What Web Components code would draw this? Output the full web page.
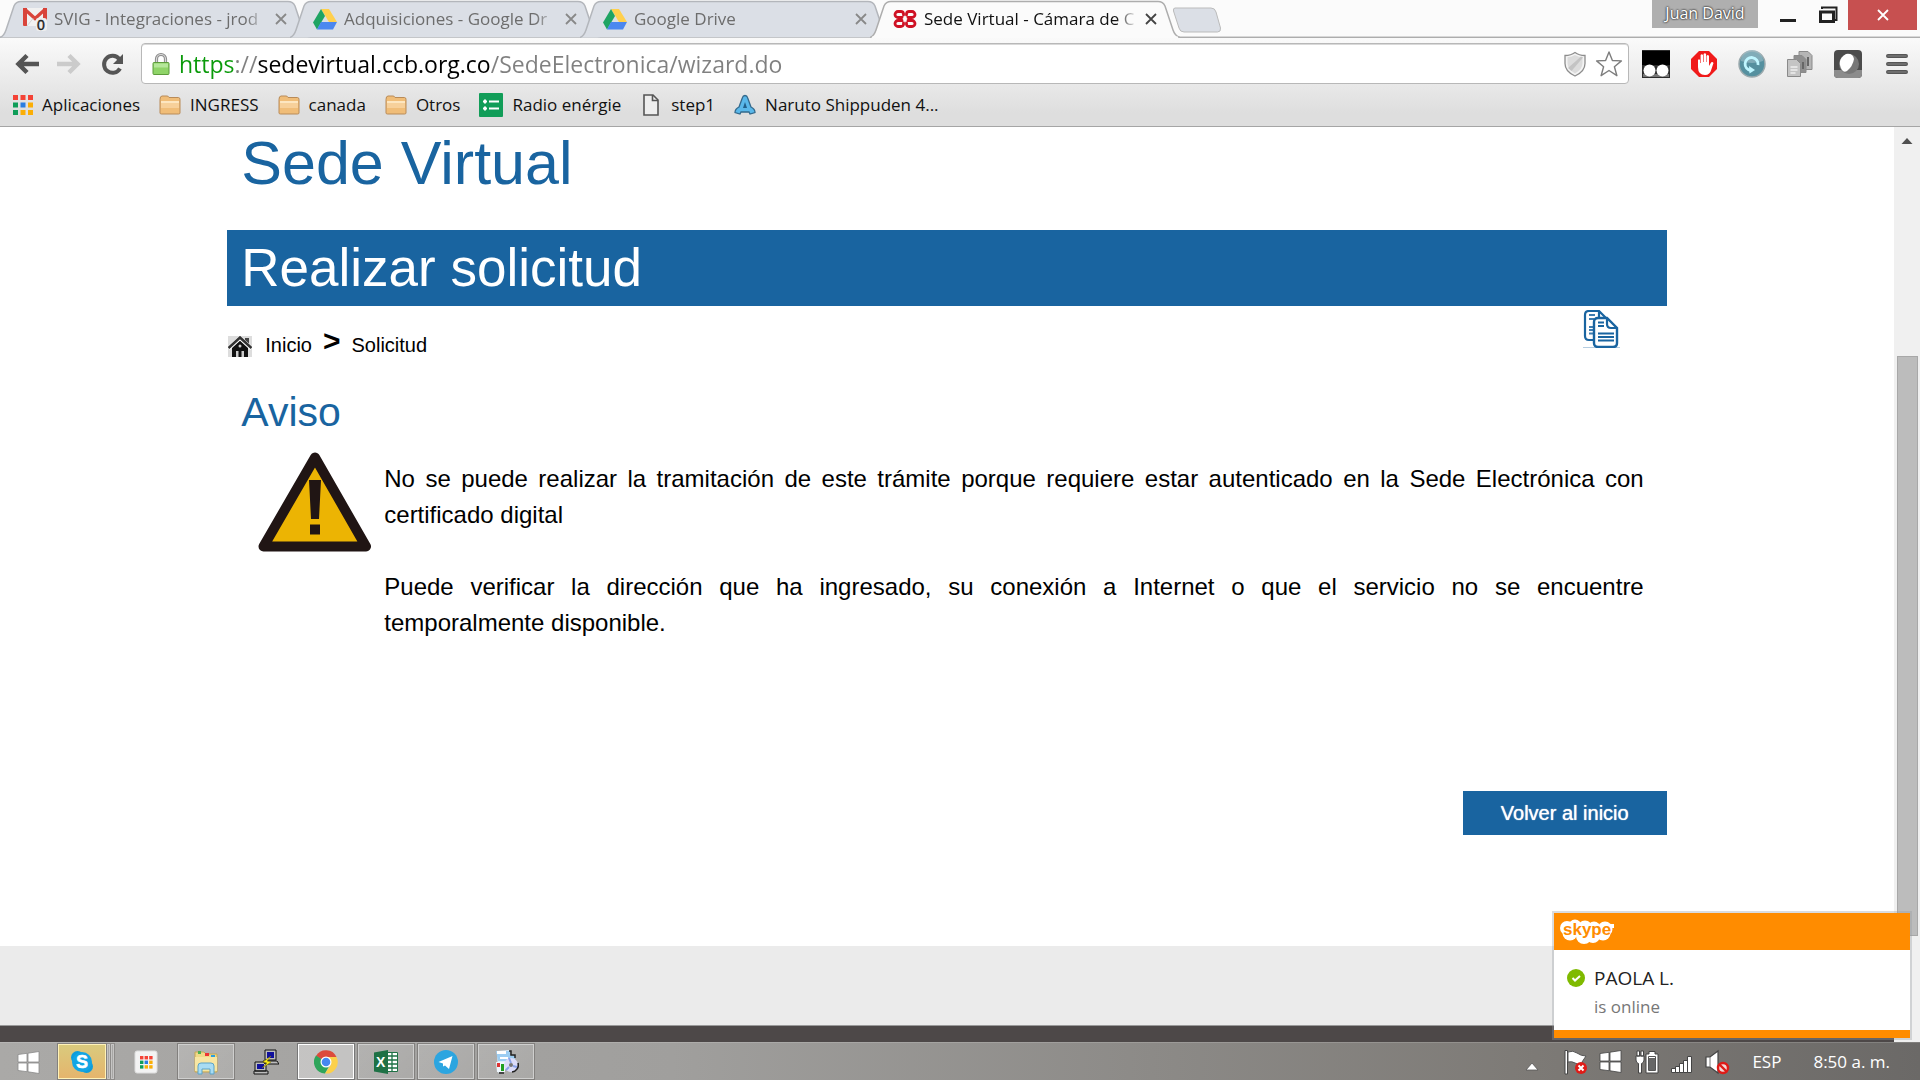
<!DOCTYPE html>
<html lang="es">
<head>
<meta charset="utf-8">
<title>Sede Virtual - Cámara de Comercio</title>
<style>
  html, body { margin: 0; height: 100%; }
  body { font-family: "Open Sans", "Noto Sans", sans-serif; background: #fff; color: #000; overflow: hidden; }
</style>
</head>
<body>
<desktop-shell>
  <browser-chrome slot="chrome"></browser-chrome>
  <portal-page slot="page">
    <page-breadcrumb slot="path"></page-breadcrumb>
    <notice-box slot="notice">
      <p>No se puede realizar la tramitación de este trámite porque requiere estar autenticado en la Sede Electrónica con certificado digital</p>
      <p>Puede verificar la dirección que ha ingresado, su conexión a Internet o que el servicio no se encuentre temporalmente&nbsp;disponible.</p>
    </notice-box>
  </portal-page>
  <page-scrollbar slot="scroll"></page-scrollbar>
  <skype-toast slot="toast" name="PAOLA L." status="is online"></skype-toast>
  <task-bar slot="taskbar"></task-bar>
</desktop-shell>

<script>
const define = (name, html) => {
  const template = document.createElement('template');
  customElements.define(name, class extends HTMLElement {
    connectedCallback() {
      if (this.shadowRoot) return;
      template.innerHTML = typeof html === 'function' ? html(this) : html;
      this.attachShadow({ mode: 'open' }).append(template.content.cloneNode(true));
    }
  });
};

const svg = (w, h, body) => `<svg width="${w}" height="${h}" viewBox="0 0 ${w} ${h}" fill="none" aria-hidden="true">${body}</svg>`;
const dots = (x, y, s, p) => ['#f44336','#f44336','#f44336','#0f9d58','#2a7de1','#fbae05','#0f9d58','#fbae05','#fbae05']
  .map((c, i) => `<rect x="${x + (i % 3) * p}" y="${y + Math.floor(i / 3) * p}" width="${s}" height="${s}" fill="${c}"/>`).join('');
const winLogo = (stroke) => `<path d="M2 4.500 11 3.300V12H2zM12 3.200 23 1.500V12H12zM2 13H11v8.700L2 20.500zM12 13H23v10.500L12 21.800z" fill="#fff" stroke="${stroke}" stroke-width=".8"/>`;

const icons = {
  gmail: svg(24, 28, `<g transform="translate(0 2)"><rect y="1" width="24" height="18" rx="1" fill="#f1f1f1"/><path d="M0 1h4v18H1q-1 0-1-1zM20 1h4v17q0 1-1 1h-3z" fill="#d9443a"/><path d="M1.500 2 12 11.500 22.500 2" stroke="#d9443a" stroke-width="3.200"/><path d="M4 19 10 11.500M20 19 14 11.500" stroke="#d5d5d5"/><rect x="13" y="11" width="11" height="13" rx="3" fill="#eee"/></g><text x="14" y="25" font-family="Liberation Sans" font-size="14" fill="#222" stroke="#222" stroke-width=".4">0</text>`),
  drive: svg(24, 24, `<path d="M8 2h8l8 13h-8z" fill="#ffd04d"/><path d="M8 2 0 15.500 4 22.500 12 9z" fill="#1fa463"/><path d="M8 15h16l-4 7.500H4z" fill="#4b87f0"/>`),
  ccb: svg(24, 24, `<g stroke="#cf1124" stroke-width="2.800" stroke-linecap="round"><path d="M10.500 8V6.500Q10 4.500 8 4.500H5a3 3 0 0 0 0 6h4M13.500 8V6.500q.5-2 2.500-2h3a3 3 0 0 1 0 6h-4M10.500 16v1.500q-.5 2-2.500 2H5a3 3 0 0 1 0-6h4M13.500 16v1.500q.5 2 2.500 2h3a3 3 0 0 0 0-6h-4"/></g>`),
  back: svg(24, 24, `<path d="M12 3.500 3.500 12l8.500 8.500M4 12h20" stroke="#555" stroke-width="4.500"/>`),
  forward: svg(24, 24, `<path d="M12 3.500 20.500 12 12 20.500M20 12H0" stroke="#cbcbcb" stroke-width="4.500"/>`),
  reload: svg(24, 24, `<path d="M21 16.500a8.500 8.500 0 1 1-.8-9.500" stroke="#555" stroke-width="4"/><path d="M24 2v10h-10z" fill="#555"/>`),
  lock: svg(18, 24, `<path d="M4.500 12V7a4.500 4.500 0 0 1 9 0v5" stroke="#8b8b8b" stroke-width="3.200"/><path d="M4.500 12V7a4.500 4.500 0 0 1 9 0v5" stroke="#d9d9d9" stroke-width="1.200"/><rect x="1" y="10.500" width="16" height="12" rx="1" fill="#8fd468" stroke="#5d9c3c"/><path d="M2 11.500h14v4H2z" fill="#b5e79a"/>`),
  shield: svg(24, 26, `<path d="M12 1.500q4 3 10 3v8q0 8-10 12.500Q2 20.500 2 12.500v-8q6 0 10-3z" fill="#f4f4f4" stroke="#8d8d8d" stroke-width="1.300"/><path d="M12 4q3 2 7.500 2.200v6Q19.500 18 12 22.500 4.500 18 4.500 12.200v-6Q9 6 12 4z" fill="#dcdcdc"/><path d="M5 17 18 5.500l2 1L8.500 20z" fill="#c3c3c3"/>`),
  star: svg(28, 28, `<path d="m14 2 3.400 8.500 9 .4-7 5.800 2.500 9L14 20.500 6.100 25.700l2.500-9-7-5.800 9-.4z" stroke="#7d7d7d" stroke-width="1.400" stroke-linejoin="round" fill="#fff"/>`),
  ext1: svg(28, 28, `<rect width="28" height="28" fill="#2d2d2d"/><rect y="1" width="28" height="14" fill="#000"/><path d="M1 24h26v3H1z" fill="#777"/><circle cx="7.500" cy="20.500" r="6" fill="#fff"/><circle cx="20.500" cy="20.500" r="6" fill="#fff"/>`),
  ext2: svg(28, 28, `<path d="M9 1h10l8 8v10l-8 8H9l-8-8V9z" fill="#f01a1a"/><path d="M8 12v5q0 8 7 8 5 0 6.500-6l2-6q-1.500-2-3 .5L19 16V6q-1.200-1.800-2.400 0v6h-.5V4q-1.200-1.600-2.500 0v8H13V5q-1.200-1.700-2.400 0v8H10v-3q-1-1.600-2 0z" fill="#fff"/>`),
  ext3: svg(28, 28, `<circle cx="14" cy="14" r="13" fill="#55909f" stroke="#9aa9ad" stroke-width="1.500"/><path d="M3 11a11 11 0 0 1 22 0q-11 4-22 0z" fill="#9fbfc9" opacity=".6"/><path d="M13 20.500a6.500 6.500 0 1 1 7-5.500" stroke="#bff6ff" stroke-width="2.800"/><path d="m11 16 6 4-5.500 3.500z" fill="#bff6ff"/>`),
  ext4: svg(28, 28, `<g stroke="#8a8a8a"><path d="M13 1.500h9l4 4v14H13z" fill="#b5b5b5"/><path d="M8 5.500h8l4 4v13H8z" fill="#8f8f8f"/><path d="M1.500 9.500h9l4 4v13h-13z" fill="#c4c4c4"/></g><path d="M4.500 17h7M4.500 20h7M4.500 23h5" stroke="#eee" stroke-width="1.500"/><path d="M22 7v9M17 12v7" stroke="#666" stroke-width="2"/>`),
  ext5: svg(28, 28, `<rect width="28" height="28" rx="4" fill="#4b4b4b"/><path d="M0 20h28v4q0 4-4 4H4q-4 0-4-4z" fill="#8c8c8c"/><circle cx="15" cy="14" r="10" fill="#777"/><path d="M12 4q7-1 8 5-1 7-7 12-3 2-5-1-6-10 4-16z" fill="#fff"/>`),
  menu: svg(24, 22, `<g stroke="#555" stroke-width="4" stroke-linecap="round"><path d="M3 3h18M3 11h18M3 19h18"/></g><g stroke="#777" stroke-width="1.600" stroke-linecap="round"><path d="M3 3h18M3 11h18M3 19h18"/></g>`),
  apps: svg(20, 20, dots(0, 0, 5, 7.5)),
  folder: svg(22, 20, `<path d="M1 4.500Q1 1 3 1h5q1.500 0 2 1.500h9.500q1.500 0 1.500 2V18q0 1-1.500 1h-17Q1 19 1 18z" fill="#f0bd78" stroke="#b98b58"/><path d="M2 6h18v2.500H2z" fill="#fde6c0"/><path d="M2 8.500h18V13H2z" fill="#f7d09a"/>`),
  sheet: svg(24, 24, `<rect width="24" height="24" rx="1" fill="#119d58"/><path d="M4 8.500h4M6 6.500v4M4 15.500h4M6 13.500v4M10 8.500h10M10 15.500h10" stroke="#fff" stroke-width="2"/>`),
  file: svg(22, 22, `<path d="M4 1h9l5 5v15H4z" fill="#eee" stroke="#555" stroke-width="1.600"/><path d="M12.500 1v5.500H18" stroke="#555" stroke-width="1.600"/>`),
  aicon: svg(22, 22, `<path d="M11 1.500q2 0 2.600 2.200L17 13q4 2 4 5.500l-5 1.500-1-2H7l-1 2-5-1.500Q1 15 5 13l3.400-9.300Q9 1.500 11 1.500z" fill="#5ab8ea" stroke="#33698c" stroke-width="1.300"/><path d="m11 8 2 6H9z" fill="#23618b"/>`),
  home: svg(24, 22, `<rect width="24" height="21" fill="#ddd"/><path d="M17 2h4v7h-4z" fill="#444"/><path d="M4 11 12 4l8 7v10H4z" fill="#111"/><path d="M.500 12.500 12 2l11.500 10.500" stroke="#fff" stroke-width="4"/><path d="M.500 12 12 1.500 23.500 12" stroke="#333" stroke-width="2.600"/><path d="M8 21v-6h2.500v6zM13.500 21v-6H16v6z" fill="#ccc"/><circle cx="12" cy="10" r="1.500" fill="#ccc"/>`),
  copy: svg(38, 38, `<path d="M0 37.500h37" stroke="#b5cde1"/><path d="M11 30H6q-4 0-4-4V5q0-4 4-4h10l7 7M16 1v7" stroke="#1964a0" stroke-width="2.200"/><path d="M6 5h6M6 9h5M6 17h5M6 20h5M6 23.500h5" stroke="#3f7db0" stroke-width="1.800"/><path d="M15 8h9l10 10v15q0 4-4 4H15q-4 0-4-4V12q0-4 4-4z" fill="#fff" stroke="#1964a0" stroke-width="2.400"/><path d="M24 8v6q0 4 4 4h6" stroke="#1964a0" stroke-width="2.200"/><path d="M15 12.500h6M15 16h6M15 23.500h16M15 27h16M15 30.500h16" stroke="#1964a0" stroke-width="1.800"/>`),
  warning: svg(113, 100, `<path d="M57 5.500 108 94.500H5.500z" fill="#ecb403" stroke="#201514" stroke-width="10" stroke-linejoin="round"/><path d="M51 28h12l-2 39h-8zM52 72.500h10v10H52z" fill="#201514"/>`),
  online: svg(18, 18, `<circle cx="9" cy="9" r="9" fill="#7fba00"/><path d="m5.500 9 2.500 2.500 5-4.500" stroke="#fff" stroke-width="2"/>`),
  skypelogo: svg(54, 26, `<g fill="#fff"><circle cx="7" cy="9" r="7"/><circle cx="15" cy="7" r="6.500"/><circle cx="25" cy="9" r="7.500"/><circle cx="34" cy="9" r="6.500"/><circle cx="45" cy="10" r="7.500"/><circle cx="10" cy="14" r="7.500"/><circle cx="24" cy="17" r="8"/><circle cx="33" cy="17" r="7"/><circle cx="43" cy="14" r="7.500"/><path d="M6 8h44v8H6zM48 5h6v4h-6z"/></g><text x="3" y="16" font-family="Liberation Sans" font-size="17" font-weight="700" fill="#ff8c00">skype</text>`),
  win: svg(24, 24, winLogo('#8a8a8a')),
  winTray: svg(26, 26, winLogo('#444')),
  skype: svg(24, 24, `<circle cx="7.500" cy="7.500" r="6.500" fill="#0d9ddb"/><circle cx="16.500" cy="16.500" r="6.500" fill="#0d9ddb"/><circle cx="12" cy="12" r="10" fill="#12a5e4"/><text x="6" y="18" font-family="Liberation Sans" font-size="18" font-weight="700" fill="#fff" stroke="#fff" stroke-width=".5">S</text>`),
  launcher: svg(24, 24, `<rect x="1" y="1" width="22" height="22" rx="2" fill="#f3f3f3" stroke="#ddd"/>${dots(6, 6, 3.4, 4.6)}`),
  explorer: svg(26, 26, `<path d="M2 3h9l2 2h11v18H2z" fill="#f0d987" stroke="#c4a656"/><path d="M5 2h3v3H5z" fill="#4caf50"/><path d="M12 4h4v3h-4z" fill="#e33"/><path d="M18 6h4v3h-4z" fill="#2a9fe0"/><path d="M2 8h22v14H2z" fill="#f7e6a3"/><path d="M5 25V17q0-3 3-3h10q3 0 3 3v8h-4v-5H9v5z" fill="#a8dcf3" stroke="#5aa3c8"/>`),
  putty: svg(26, 26, `<g stroke="#111" fill="#bdbdbd"><path d="M12 1h11v10H12zM10 12h14l2 3H12zM2 13h11v9H2zM1 22h14v3H1z"/></g><path d="M14 3h7v6h-7zM4 15h7v5H4z" fill="#10109c"/><path d="m18 7-8 6 4 1-5 5 9-6-4-1z" fill="#ffee1a" stroke="#8a7f00" stroke-width=".5"/>`),
  chrome: svg(24, 24, `<path d="M12 12 2 6a11.500 11.500 0 0 1 20.500 1z" fill="#dc4a3c"/><path d="M12 12 2 5.500A11.500 11.500 0 0 0 11 23.500l5-9z" fill="#2ea55a"/><path d="M12 12V7h10.500A11.500 11.500 0 0 1 11 23.500l6-9z" fill="#fbd04a"/><circle cx="12" cy="12" r="5.500" fill="#fff"/><circle cx="12" cy="12" r="4.300" fill="#4688f1"/>`),
  excel: svg(26, 26, `<path d="M13 3.500h11.500v19H13z" fill="#fff" stroke="#1e7145"/><path d="M14 7h10M14 11h10M14 15h10M14 19h10M19 4v18" stroke="#1e7145" stroke-width="1.300"/><path d="m1 3.500 14-2.500v24L1 22.500z" fill="#1e7145"/><text x="3" y="18" font-family="Liberation Sans" font-size="14" font-weight="700" fill="#fff">X</text>`),
  telegram: svg(24, 24, `<circle cx="12" cy="12" r="12" fill="#2ca5e0"/><path d="M4.500 12 18.500 6 15 19l-4-3.500-2 1v-3z" fill="#fff"/>`),
  installer: svg(26, 26, `<path d="M4 2 17 1v13L5 24z" fill="#dbeefb"/><path d="M3 2h14v4l5 1v4l-8 1H5z" fill="#9ccdf2"/><path d="M4 2h9v3H4zM7 8h8v2H7z" fill="#fff"/><path d="M16 2h2v4h4v3" stroke="#222" stroke-width="1.500"/><path d="M3 13h9v10H4z" fill="#eef6fc"/><path d="M8 15h3v7H8z" fill="#20a020"/><path d="M4 14h3v4H4z" fill="#d33"/><circle cx="18" cy="16" r="7" fill="#dcdcf8"/><path d="M25 14a7 7 0 0 1-6 9M6 24h5" stroke="#222" stroke-width="1.600"/><circle cx="18" cy="16" r="2" fill="#777"/><path d="m16 9 2 5M24 18l-4-1M13 21l3-3" stroke="#8aa2ea" stroke-width="2"/>`),
  flag: svg(26, 26, `<path d="M3 1.500h2.500V25H3z" fill="#fff" stroke="#444"/><path d="M6 3q5-2 9 1t9 3l-4 6 2 3q-6 0-9-2t-7-1z" fill="#fff" stroke="#555"/><circle cx="19" cy="19" r="6" fill="#df1b17"/><path d="m16.500 16.500 5 5m0-5-5 5" stroke="#fff" stroke-width="2"/>`),
  battery: svg(26, 26, `<path d="M2 7h8v4q0 3-2.500 3.500V24h-3V14.500Q2 14 2 11zM3 2h2.500v5H3zM7 2h2.500v5H7z" fill="#fff" stroke="#444"/><path d="M12 5h3V2.500h6V5h3v19H12z" fill="#fff" stroke="#444"/><path d="M14.500 7.500h7v14h-7z" fill="#fff" stroke="#555"/><path d="M15 9h6v12h-6z" fill="#666"/>`),
  signal: svg(24, 24, `<g fill="#fff" stroke="#444"><path d="M1.500 18.500h4v4h-4zM5.500 16.500h4v6h-4zM9.500 13.500h4v9h-4zM13.500 10.500h4v12h-4zM17.500 6.500h4v16h-4z"/></g>`),
  speaker: svg(26, 26, `<path d="M2 8h4l8-6v22l-8-6H2z" fill="#fff" stroke="#444" stroke-width="1.200"/><path d="M6 8v10" stroke="#777"/><circle cx="19" cy="19" r="5" fill="#f3d9d9" stroke="#df1b17" stroke-width="2.400"/><path d="m15.500 15.500 7 7" stroke="#df1b17" stroke-width="2.400"/>`),
  up: svg(14, 10, `<path d="M7 1 13 8H1z" fill="#fff" stroke="#555" stroke-width=".8"/>`),
  close: svg(14, 14, `<path d="m2 2 10 10M12 2 2 12" stroke="currentColor" stroke-width="1.800"/>`),
  minimise: svg(18, 18, `<path d="M1 14.500h16" stroke="#222" stroke-width="3"/>`),
  restore: svg(20, 18, `<path d="M4 3V1.500h14.500V14H17" stroke="#222" stroke-width="2"/><path d="M2.500 6h13v9.500h-13z" stroke="#222" stroke-width="3"/>`)
};

define('ui-icon', el => `<style>:host{display:inline-flex;flex:none}svg{display:block}</style>${icons[el.getAttribute('name')] || ''}`);

define('browser-tab', el => {
  const on = el.hasAttribute('active');
  return `<style>
  :host { display: flex; position: relative; flex: none; width: 310px; height: 38px; margin-right: -20px; color: ${on ? '#111' : '#6d6d6d'}; z-index: ${on ? 2 : 0}; }
  .shape { position: absolute; inset: 0; }
  .row { position: relative; display: flex; align-items: center; flex: 1; padding: 0 22px 0 23px; gap: 7px; }
  .title { flex: 1; overflow: hidden; white-space: nowrap; font-size: 17px; line-height: 24px; -webkit-mask-image: linear-gradient(90deg, #000 90%, transparent); }
  button { border: 0; background: none; padding: 0; display: flex; color: ${on ? '#444' : '#888'}; }
  </style>
  <svg class="shape" width="310" height="38" aria-hidden="true"><path d="M0 37.500Q4 36 6 30L14 6Q16 1.500 21 1.500H288Q293 1.500 295 6L303 30Q305 36 310 37.500" fill="${on ? '#fbfbfb' : '#dbdfe6'}" stroke="${on ? '#adadad' : '#b3b6bb'}" stroke-width="1.500"/>${on ? '<path d="M2 37.500h306" stroke="#fbfbfb" stroke-width="2"/>' : ''}</svg>
  <div class="row"><ui-icon name="${el.getAttribute('icon')}"></ui-icon><span class="title"><slot></slot></span><button aria-label="Cerrar pestaña"><ui-icon name="close"></ui-icon></button></div>`;
});

define('book-mark', el => `<style>
  :host { display: flex; }
  a { display: flex; align-items: center; gap: 9px; color: #111; text-decoration: none; font-size: 17px; line-height: 24px; white-space: nowrap; }
  </style><a href="#"><ui-icon name="${el.getAttribute('icon')}"></ui-icon><slot></slot></a>`);

define('browser-chrome', `<style>
  :host { display: block; background: #fbfbfb; }
  button { border: 0; background: none; padding: 0; display: flex; align-items: center; justify-content: center; }
  .strip { display: flex; height: 38px; align-items: flex-start; box-shadow: inset 0 -1px #adadad, inset 0 -2px #d8d8d8; }
  .new { flex: none; margin: 7px 0 0 12px; }
  .win { display: flex; margin-left: auto; padding-right: 3px; align-items: flex-start; }
  .win button { height: 30px; width: 40px; }
  .win .user { background: #afafaf; color: #fff; font-size: 16px; line-height: 28px; height: 28px; width: 106px; white-space: nowrap; text-shadow: 0 0 2px #222, 0 0 2px #222; margin-right: 10px; font-family: inherit; padding-bottom: 2px; }
  .win .x { width: 69px; background: #c75050; color: #fff; }
  .tools { background: linear-gradient(#fafafa, #dedede 85%); border-bottom: 1px solid #a5a5a5; }
  .nav { display: flex; align-items: center; padding: 5px 11px 0 15px; }
  .nav > button { margin-right: 18px; }
  .omni { display: flex; align-items: center; flex: 1; height: 39px; margin-right: 13px; border: 1px solid #b8b8b8; border-radius: 4px; background: #fff; padding: 0 5px 0 10px; gap: 8px; box-shadow: inset 0 1px #d9d9d9; }
  input { flex: 1; min-width: 0; border: 0; padding: 0 0 0 1px; outline: 0; font: 23px/34px "Open Sans", "Noto Sans", sans-serif; height: 36px; color: #808080;
    -webkit-text-fill-color: transparent; background: linear-gradient(90deg, #0a9a0a 0 57px, #808080 57px 79px, #000 79px 313px, #808080 313px) text; }
  .ext { display: flex; gap: 20px; align-items: center; }
  .menu { margin-left: 3px; }
  .marks { display: flex; height: 42px; align-items: center; padding-left: 13px; gap: 19px; }
  </style>
  <div class="strip">
    <browser-tab icon="gmail">SVIG - Integraciones - jrod</browser-tab>
    <browser-tab icon="drive">Adquisiciones - Google Dr</browser-tab>
    <browser-tab icon="drive">Google Drive</browser-tab>
    <browser-tab icon="ccb" active>Sede Virtual - Cámara de C</browser-tab>
    <button class="new" aria-label="Nueva pestaña"><svg width="50" height="26" aria-hidden="true"><path d="M3 1h36q4 0 5 4l4.500 16q.5 4-3 4H12q-4 0-5-4L1.500 4Q1 1 3 1z" fill="#dbdfe6" stroke="#bbb"/></svg></button>
    <div class="win">
      <button class="user">Juan David</button>
      <button aria-label="Minimizar"><ui-icon name="minimise"></ui-icon></button>
      <button aria-label="Restaurar"><ui-icon name="restore"></ui-icon></button>
      <button class="x" aria-label="Cerrar"><ui-icon name="close"></ui-icon></button>
    </div>
  </div>
  <div class="tools">
    <div class="nav">
      <button aria-label="Atrás"><ui-icon name="back"></ui-icon></button>
      <button aria-label="Adelante"><ui-icon name="forward"></ui-icon></button>
      <button aria-label="Recargar"><ui-icon name="reload"></ui-icon></button>
      <div class="omni"><ui-icon name="lock"></ui-icon><input type="text" aria-label="Dirección" spellcheck="false" value="https://sedevirtual.ccb.org.co/SedeElectronica/wizard.do"><ui-icon name="shield"></ui-icon><ui-icon name="star"></ui-icon></div>
      <div class="ext">
        <button aria-label="Extensión 1"><ui-icon name="ext1"></ui-icon></button>
        <button aria-label="Bloqueador"><ui-icon name="ext2"></ui-icon></button>
        <button aria-label="Extensión 3"><ui-icon name="ext3"></ui-icon></button>
        <button aria-label="Copiar páginas"><ui-icon name="ext4"></ui-icon></button>
        <button aria-label="Extensión 5"><ui-icon name="ext5"></ui-icon></button>
        <button class="menu" aria-label="Menú"><ui-icon name="menu"></ui-icon></button>
      </div>
    </div>
    <nav class="marks">
      <book-mark icon="apps">Aplicaciones</book-mark>
      <book-mark icon="folder">INGRESS</book-mark>
      <book-mark icon="folder">canada</book-mark>
      <book-mark icon="folder">Otros</book-mark>
      <book-mark icon="sheet">Radio enérgie</book-mark>
      <book-mark icon="file">step1</book-mark>
      <book-mark icon="aicon">Naruto Shippuden 4...</book-mark>
    </nav>
  </div>`);

define('page-breadcrumb', `<style>
  :host { display: flex; align-items: center; padding: 23px 0 0 1px; font-size: 20px; line-height: 24px; }
  a { color: #000; text-decoration: none; }
  .home { display: flex; margin-right: 13px; padding-top: 4px; }
  b { font-size: 30px; margin: 0 11px; padding-bottom: 8px; }
  </style>
  <a class="home" href="#" aria-label="Portada"><ui-icon name="home"></ui-icon></a><a href="#">Inicio</a><b>&gt;</b><a href="#">Solicitud</a>`);

define('notice-box', `<style>
  :host { display: flex; align-items: flex-start; gap: 13px; padding: 16px 23px 0 31px; font-size: 24px; line-height: 36px; text-align: justify; }
  .text { flex: 1; padding-top: 9px; }
  ::slotted(p) { margin: 0 0 36px; }
  </style><ui-icon name="warning"></ui-icon><div class="text"><slot></slot></div>`);

define('portal-page', `<style>
  :host { display: flex; flex-direction: column; font-family: "Liberation Sans", Arial, sans-serif; background: #fff; }
  main { width: 76%; margin: 0 auto; flex: none; }
  h1, h2, h3 { margin: 0; font-weight: 400; padding-left: 14px; }
  h1 { font-size: 61px; line-height: 72px; color: #1964a0; }
  h2 { font-size: 53px; line-height: 76px; margin-top: 31px; background: #1964a0; color: #fff; }
  h3 { font-size: 41px; line-height: 48px; color: #1964a0; margin-top: 31px; }
  .row { display: flex; justify-content: space-between; align-items: flex-start; height: 51px; }
  .copy { border: 0; background: none; padding: 0; margin: 4px 46px 0 0; }
  .actions { display: flex; justify-content: flex-end; padding: 114px 0 111px; }
  .go { width: 204px; border: 0; background: #1964a0; color: #fff; font: 20px/44px "Liberation Sans", Arial, sans-serif; height: 44px; padding: 0; text-shadow: 0 0 1px #fff; }
  footer { flex: 1; display: flex; flex-direction: column; background: #ebebeb; }
  footer div { margin-top: auto; height: 16px; background: #4d4848; border-top: 1px solid #999; }
  </style>
  <main>
    <h1>Sede Virtual</h1>
    <h2>Realizar solicitud</h2>
    <div class="row"><slot name="path"></slot><button class="copy" aria-label="Copiar"><ui-icon name="copy"></ui-icon></button></div>
    <h3>Aviso</h3>
    <slot name="notice"></slot>
    <div class="actions"><button class="go">Volver al inicio</button></div>
  </main>
  <footer><div></div></footer>`);

define('page-scrollbar', `<style>
  :host { display: flex; flex-direction: column; align-items: center; width: 26px; background: #f0f0f0; }
  svg { margin: 10px 0; flex: none; }
  .track { flex: 1; align-self: stretch; display: grid; grid-template-rows: 201fr 580fr 106fr; padding: 0 2px 0 3px; }
  .thumb { grid-row: 2; background: #bcbcbc; border: 1px solid #a8a8a8; }
  </style><svg width="12" height="8" aria-hidden="true"><path d="M6 1 11.500 7H.500z" fill="#505050"/></svg><div class="track"><div class="thumb"></div></div>`);

define('skype-toast', el => `<style>
  :host { display: block; width: 356px; border: 2px solid rgba(150,155,160,.35); background-clip: padding-box; }
  header { background: #ff8c00; height: 31px; padding: 6px 0 0 6px; }
  .body { background: #fff; display: grid; grid-template-columns: 18px auto; justify-content: start; column-gap: 9px; align-items: center; height: 67px; padding: 13px 13px 0; align-content: start; border-bottom: 8px solid #ff8c00; }
  .name { font-size: 19px; line-height: 30px; color: #222; }
  .st { grid-column: 2; font-size: 17px; line-height: 28px; color: #777; }
  </style><header><ui-icon name="skypelogo"></ui-icon></header>
  <div class="body"><ui-icon name="online"></ui-icon><span class="name">${el.getAttribute('name')}</span><span class="st">${el.getAttribute('status')}</span></div>`);

define('task-button', el => `<style>
  :host { display: flex; flex: none; }
  button { width: 58px; height: 37px; box-sizing: border-box; padding: 0; display: flex; align-items: center; justify-content: center; background: none; border: 0; }
  :host([state]) button { border: 1px solid #82807e; background: linear-gradient(135deg, rgba(255,255,255,.16), rgba(255,255,255,.08)); box-shadow: inset 0 0 0 1px #cfcfce; }
  :host([state=active]) button { background: rgba(255,255,255,.35); box-shadow: inset 0 0 0 1px #fff; border-color: #777; }
  :host([state=alert]) button { width: 50px; background: linear-gradient(#d9cb7e, #e5b46c); box-shadow: inset 0 0 0 1px #fff2b8; }
  :host([state=start]) button { width: 55px; border: 0; background: none; box-shadow: none; }
  i { display: none; width: 3px; height: 35px; border: solid #8d8b89; border-width: 1px 1px 1px 0; box-shadow: inset 0 0 0 1px #c6c5c4; }
  :host([state=alert]) i { display: block; }
  </style><button aria-label="${el.getAttribute('label')}"><ui-icon name="${el.getAttribute('icon')}"></ui-icon></button><i></i><i></i>`);

define('task-bar', `<style>
  :host { display: flex; height: 38px; align-items: flex-end; background: linear-gradient(90deg, #aaa9a7, #a09f9d 35%, #8c8a87 60%, #7d7a76 80%, #6b6967); box-shadow: inset 0 1px rgba(255,255,255,.15); color: #fff; }
  .apps { display: flex; gap: 2px; align-items: flex-end; }
  .tray { display: flex; align-items: center; margin-left: auto; height: 37px; padding-right: 30px; font-size: 17px; white-space: nowrap; }
  button { border: 0; background: none; padding: 0; display: flex; margin-right: 10px; }
  .more { margin-right: 23px; padding-top: 10px; }
  .lang { margin: 0 32px 0 12px; color: #fff; font-family: inherit; font-size: 17px; }
  </style>
  <div class="apps">
    <task-button icon="win" label="Inicio" state="start"></task-button>
    <task-button icon="skype" label="Skype" state="alert"></task-button>
    <task-button icon="launcher" label="Aplicaciones"></task-button>
    <task-button icon="explorer" label="Explorador" state="open"></task-button>
    <task-button icon="putty" label="PuTTY"></task-button>
    <task-button icon="chrome" label="Chrome" state="active"></task-button>
    <task-button icon="excel" label="Excel" state="open"></task-button>
    <task-button icon="telegram" label="Telegram" state="open"></task-button>
    <task-button icon="installer" label="Instalador" state="open"></task-button>
  </div>
  <div class="tray">
    <button class="more" aria-label="Mostrar iconos ocultos"><ui-icon name="up"></ui-icon></button>
    <button aria-label="Centro de actividades"><ui-icon name="flag"></ui-icon></button>
    <button aria-label="Windows"><ui-icon name="winTray"></ui-icon></button>
    <button aria-label="Batería"><ui-icon name="battery"></ui-icon></button>
    <button aria-label="Red"><ui-icon name="signal"></ui-icon></button>
    <button aria-label="Volumen"><ui-icon name="speaker"></ui-icon></button>
    <button class="lang">ESP</button>
    <time>8:50 a. m.</time>
  </div>`);

define('desktop-shell', `<style>
  :host { display: flex; flex-direction: column; min-height: 100vh; position: relative; }
  .view { flex: 1; display: flex; }
  slot[name=page]::slotted(*) { flex: 1; }
  slot[name=toast]::slotted(*) { position: absolute; right: 8px; bottom: 40px; }
  </style>
  <slot name="chrome"></slot>
  <div class="view"><slot name="page"></slot><slot name="scroll"></slot></div>
  <slot name="taskbar"></slot>
  <slot name="toast"></slot>`);
</script>
</body>
</html>
